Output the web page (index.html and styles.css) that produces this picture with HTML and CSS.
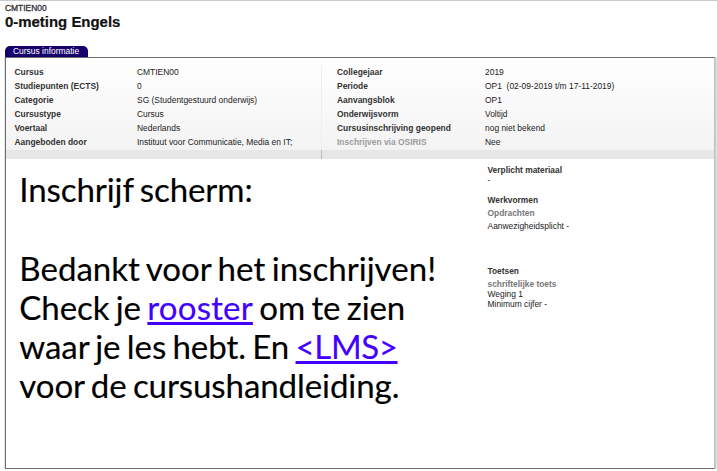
FILE: index.html
```html
<!DOCTYPE html>
<html lang="nl">
<head>
<meta charset="utf-8">
<title>0-meting Engels</title>
<link rel="stylesheet" href="styles.css">
</head>
<body>
<header class="heading">
  <div class="code">CMTIEN00</div>
  <h1>0-meting Engels</h1>
</header>
<div class="tab"><span>Cursus informatie</span></div>
<main class="panel">
  <section class="info">
    <dl class="column left">
      <dt>Cursus</dt><dd>CMTIEN00</dd>
      <dt>Studiepunten (ECTS)</dt><dd>0</dd>
      <dt>Categorie</dt><dd>SG (Studentgestuurd onderwijs)</dd>
      <dt>Cursustype</dt><dd>Cursus</dd>
      <dt>Voertaal</dt><dd>Nederlands</dd>
      <dt>Aangeboden door</dt><dd>Instituut voor Communicatie, Media en IT;</dd>
    </dl>
    <dl class="column right">
      <dt>Collegejaar</dt><dd>2019</dd>
      <dt>Periode</dt><dd>OP1 &nbsp;(02-09-2019 t/m 17-11-2019)</dd>
      <dt>Aanvangsblok</dt><dd>OP1</dd>
      <dt>Onderwijsvorm</dt><dd>Voltijd</dd>
      <dt>Cursusinschrijving geopend</dt><dd>nog niet bekend</dd>
      <dt class="muted">Inschrijven via OSIRIS</dt><dd>Nee</dd>
    </dl>
  </section>
  <div class="strip"></div>
  <div class="content">
    <section class="message">
      <p>Inschrijf scherm:</p>
      <p><span class="thanks">Bedankt voor het inschrijven!</span><br>Check je <a href="#">rooster</a> om te zien<br>waar je les hebt. En <a class="lms" href="#">&lt;LMS&gt;</a><br>voor de cursushandleiding.</p>
    </section>
    <aside class="details">
      <section class="material">
        <h2>Verplicht materiaal</h2>
        <p>-</p>
      </section>
      <section class="forms">
        <h2>Werkvormen</h2>
        <h3>Opdrachten</h3>
        <p>Aanwezigheidsplicht -</p>
      </section>
      <section class="tests">
        <h2>Toetsen</h2>
        <h3>schriftelijke toets</h3>
        <p>Weging 1</p>
        <p>Minimum cijfer -</p>
      </section>
    </aside>
  </div>
</main>
</body>
</html>
```
FILE: styles.css
```css
* { box-sizing: border-box; margin: 0; padding: 0; }
body {
  width: 717px;
  height: 471px;
  overflow: hidden;
  border-top: 1px solid #c9c9c9;
  background: #fff;
  color: #222;
  font: 8.45px/10px "Liberation Sans", Arial, sans-serif;
}
.heading { height: 45px; padding: 2px 5px 0; }
.code { height: 10px; line-height: 11px; color: #333; -webkit-text-stroke: 0.3px #333; }
h1 { font-size: 14.95px; line-height: 18px; color: #111; -webkit-text-stroke: 0.2px #111; }
.tab {
  width: 83px;
  height: 11px;
  margin-left: 5px;
  padding-left: 8px;
  border-radius: 5px 5px 0 0;
  background: #170069;
  color: #fff;
  line-height: 11px;
  white-space: nowrap;
}
.panel {
  width: 710px;
  height: 412px;
  margin-left: 5px;
  border: 1px solid #6d6d6d;
  border-right: 1px solid #c2c2c2;
  box-shadow: -1px 0 #e4e4e4, 1px 0 #cecece, 2px 0 #e1e1e1;
}
.info {
  display: flex;
  height: 92px;
  padding-top: 7px;
  background: linear-gradient(#fff, #f3f3f3);
}
.column { display: grid; grid-auto-rows: 14px; line-height: 14px; white-space: nowrap; }
.left { width: 316px; grid-template-columns: 122.5px 1fr; padding-left: 8.5px; border-right: 1px solid #eee; }
.right { grid-template-columns: 148px 1fr; padding-left: 15px; }
dt { font-weight: bold; color: #333; }
.muted { color: #9b9b9b; }
.strip { height: 9px; background: linear-gradient(90deg, transparent 315px, #b9b9b9 315px 316px, transparent 316px) #e7e7e7; }
.content { display: flex; }
.message {
  width: 481.5px;
  padding: 11px 0 0 13.3px;
  color: #000;
  font: 33.1px/39px Lato, sans-serif;
  letter-spacing: -0.1px;
  word-spacing: -2px;
  -webkit-text-stroke: 0.15px;
  white-space: nowrap;
}
.thanks { letter-spacing: 0; }
.message p + p { margin-top: 40px; }
.message a { color: #4400ff; letter-spacing: 0.15px; text-decoration-thickness: 2.5px; text-underline-offset: 2px; }
.message .lms { letter-spacing: -0.4px; }
.details { padding-top: 6px; white-space: nowrap; }
h2 { font-size: 8.4px; line-height: 10px; color: #333; }
h3 { font-size: 8.4px; line-height: 10px; color: #777; }
.material { height: 30px; }
.forms { height: 71px; }
.forms h3 { margin: 3px 0; }
.tests h3 { margin-top: 3px; }
```
